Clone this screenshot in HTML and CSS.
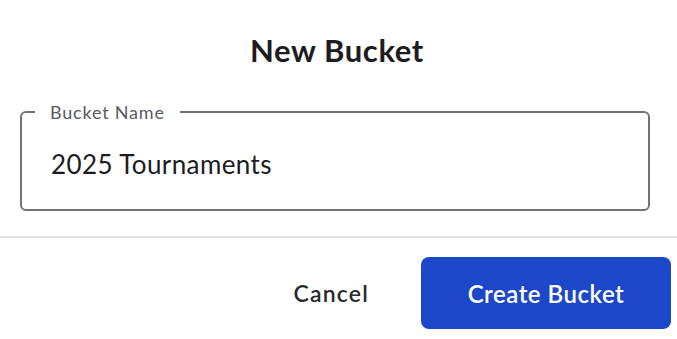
FILE: index.html
```html
<!DOCTYPE html>
<html lang="en">
<head>
<meta charset="utf-8">
<title>New Bucket</title>
<link rel="stylesheet" href="styles.css">
</head>
<body>
  <div class="dialog">
    <h2 class="title">New Bucket</h2>
    <div class="content">
      <fieldset class="field">
        <legend class="field-label">Bucket Name</legend>
        <div class="field-value">2025 Tournaments</div>
      </fieldset>
    </div>
    <div class="divider"></div>
    <div class="actions">
      <button class="btn btn-text">Cancel</button>
      <button class="btn btn-primary">Create Bucket</button>
    </div>
  </div>
</body>
</html>
```

FILE: styles.css
```css
html, body {
  margin: 0;
  padding: 0;
  background: #ffffff;
}

body {
  font-family: Lato, "Noto Sans", "Liberation Sans", sans-serif;
  color: #1c1c1f;
}

.dialog {
  width: 677px;
  height: 339px;
  overflow: hidden;
}

.title {
  margin: 32px 0 0 0;
  padding-right: 3px;
  font-size: 31px;
  line-height: 36px;
  font-weight: 700;
  letter-spacing: 0.6px;
  text-align: center;
  color: #1d1d21;
}

.content {
  padding: 0 27px 0 20px;
  margin-top: 34px;
}

.field {
  margin: 0;
  padding: 0;
  border: 2px solid #727279;
  border-radius: 6px;
  min-width: 0;
}

.field-label {
  margin-left: 13px;
  padding: 0 15px;
  font-size: 18px;
  line-height: 20px;
  letter-spacing: 0.8px;
  color: #5a5a62;
}

.field-value {
  padding: 27px 0 30px 29px;
  font-size: 26px;
  line-height: 30px;
  letter-spacing: 0.4px;
  color: #1c1c1f;
}

.divider {
  margin-top: 25px;
  height: 2px;
  background: #e3e3e3;
}

.actions {
  display: flex;
  justify-content: flex-end;
  align-items: center;
  padding: 19px 6px 0 0;
}

.btn {
  font-family: inherit;
  border: none;
  background: none;
  cursor: pointer;
}

.btn-text {
  padding: 0 26px;
  margin-right: 26px;
  height: 72px;
  font-size: 23px;
  font-weight: 600;
  letter-spacing: 1.2px;
  color: #2a2a2d;
}

.btn-primary {
  width: 250px;
  height: 72px;
  border-radius: 8px;
  background: #1d47c9;
  color: #ffffff;
  font-size: 24px;
  font-weight: 600;
  letter-spacing: 0.5px;
}
```
